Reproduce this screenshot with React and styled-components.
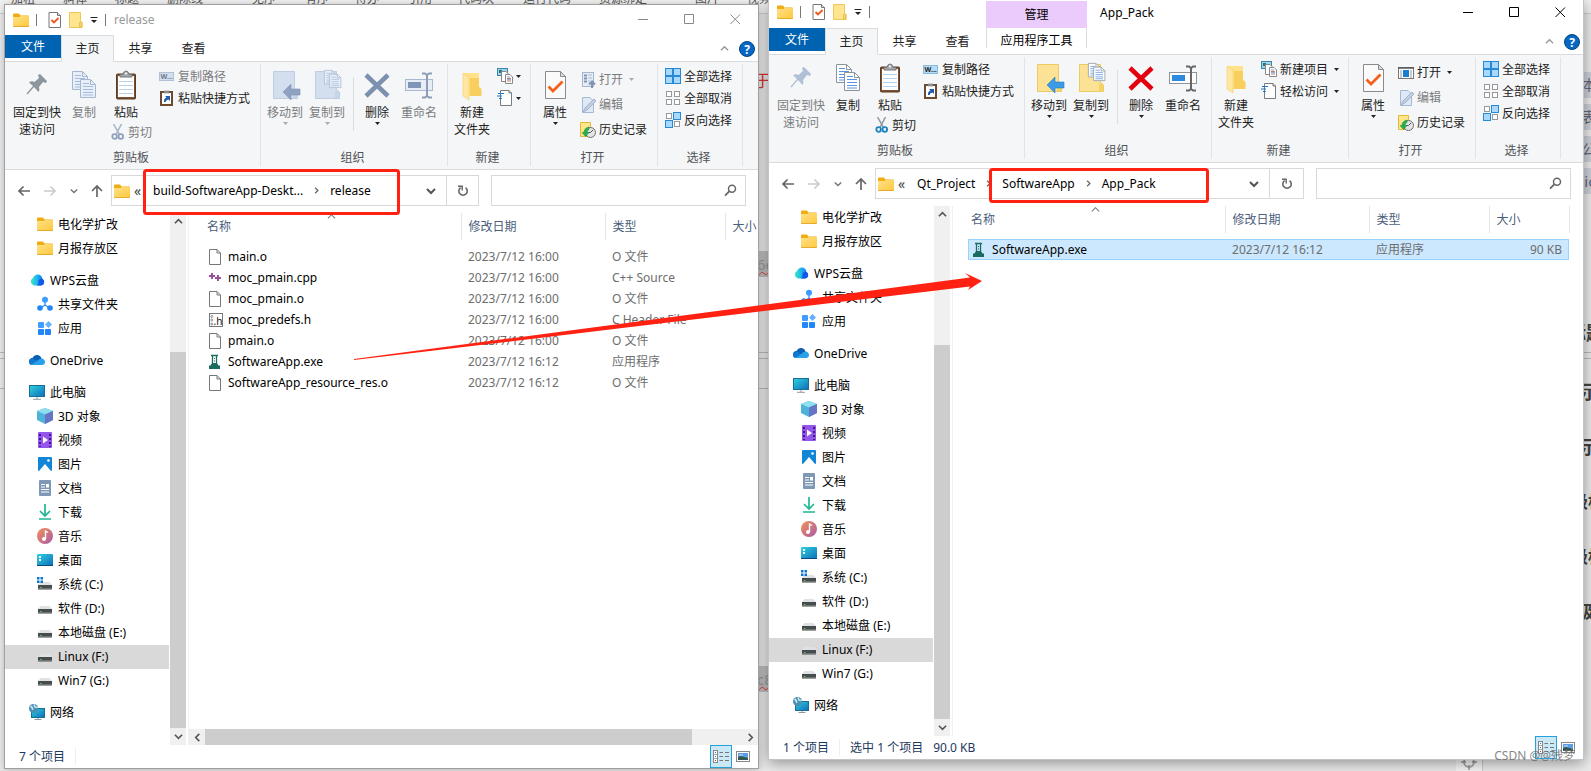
import { createContext, useContext } from 'react'
import styled, { createGlobalStyle, css } from 'styled-components'

const GlobalStyle = createGlobalStyle`
* { box-sizing: border-box; }
body {
  margin: 0;
  overflow: hidden;
  font-family: "Noto Sans", "Noto Sans CJK SC", sans-serif;
  font-size: 12px;
  line-height: 17px;
  color: #000;
}
button, input {
  font: inherit;
  color: inherit;
  border: 0;
  padding: 0;
  background: none;
}
a { color: inherit; text-decoration: none; }
`

const Dim = createContext(false)

/* ---------- small icons ---------- */

const Folder = () => (
  <svg width="16" height="16" viewBox="0 0 16 16">
    <defs>
      <linearGradient id="folder" x1="0" y1="0" x2="1" y2="1">
        <stop offset="0" stopColor="#ffe08a" /><stop offset="1" stopColor="#ffc93c" />
      </linearGradient>
    </defs>
    <path d="M0 2.5Q0 1.5 1 1.5H6L7.5 3.5H15Q16 3.5 16 4.5V8H0Z" fill="#f0ac12" />
    <path d="M0 5H6.5L8 4H16V13.5Q16 14.5 15 14.5H1Q0 14.5 0 13.5Z" fill="url(#folder)" />
    <path d="M0 13.5Q0 14.5 1 14.5H15Q16 14.5 16 13.5" fill="none" stroke="#e8aa2b" />
  </svg>
)
const CheckedPage = () => (
  <svg width="14" height="16" viewBox="0 0 14 16">
    <path d="M1 .5H9.5L12.5 3.5V15.5H1Z" fill="#fff" stroke="#777" />
    <path d="M9.5.5V3.5H12.5" fill="#ddd" stroke="#777" />
    <path d="M3.500 8L6 10.5L10.5 6" fill="none" stroke="#f0561d" strokeWidth="1.8" />
  </svg>
)
const TallFolder = () => (
  <svg width="14" height="16" viewBox="0 0 14 16">
    <path d="M.5.5H11.5V9L13 11V15.5H.5Z" fill="#ffe58f" stroke="#efc659" />
    <path d="M10.5 15V10.5L13 10V15Z" fill="#f8d566" stroke="#e3b53d" strokeWidth=".7" />
  </svg>
)
const QuickArrow = () => (
  <svg width="8" height="8" viewBox="0 0 8 8"><path d="M.5 1.5H7.5" stroke="#222" /><path d="M1 4H7L4 7Z" fill="#222" /></svg>
)
const Triangle = ({ color = '#222' }) => (
  <svg width="5" height="3" viewBox="0 0 5 3"><path d="M0 0H5L2.5 3Z" fill={color} /></svg>
)
const Chevron = ({ dir = 'down', size = 9, color = '#555', weight = 1.8 }) => {
  const d = { down: 'M1 3L5 7L9 3', up: 'M1 7L5 3L9 7', left: 'M7 1L3 5L7 9', right: 'M3 1L7 5L3 9' }[dir]
  return (
    <svg width={size} height={size} viewBox="0 0 10 10"><path d={d} fill="none" stroke={color} strokeWidth={weight} /></svg>
  )
}
const Help = () => (
  <svg width="16" height="16" viewBox="0 0 16 16">
    <circle cx="8" cy="8" r="7.5" fill="#0668c4" stroke="#06457f" />
    <text x="8" y="12.500" fontSize="12" fontWeight="700" textAnchor="middle" fill="#fff">?</text>
  </svg>
)
const ArrowIcon = ({ dir, color = '#666' }) => (
  <svg width="14" height="14" viewBox="0 0 14 14">
    <path
      d={{ left: 'M13 7H2M6.5 2.5L2 7L6.5 11.5', right: 'M1 7H12M7.5 2.5L12 7L7.5 11.5', up: 'M7 13V2M2 7L7 2L12 7' }[dir]}
      fill="none" stroke={color} strokeWidth="1.7"
    />
  </svg>
)
const Refresh = () => (
  <svg width="12" height="12" viewBox="0 0 12 12">
    <path d="M8.5 2.6A4.2 4.2 0 1 1 3.6 2.6" fill="none" stroke="#666" strokeWidth="1.6" />
    <path d="M1 1.3H5.2V5.5" fill="none" stroke="#666" strokeWidth="1.4" />
  </svg>
)
const Magnifier = () => (
  <svg width="13" height="13" viewBox="0 0 13 13">
    <circle cx="8" cy="4.7" r="3.5" fill="none" stroke="#666" strokeWidth="1.5" /><path d="M5.5 7.2L1 11.7" stroke="#666" strokeWidth="1.8" />
  </svg>
)

/* ---------- ribbon icons ---------- */

const Pin = ({ color = '#b1c0d6' }) => (
  <svg width="32" height="32" viewBox="0 0 32 32">
    <path d="M17 6L19 5L26 12L25 14L22 13L18 18Q19 21 17.5 23L13 18L6.5 25.5L5.5 24.5L12 17L8 13.5Q10.5 11.5 13.5 13L18 9Z" fill={color} />
  </svg>
)
const GreyPin = () => <Pin color="#8b969e" />
const Sheet = ({ x, y, dim }) => (
  <g transform={`translate(${x} ${y})`}>
    <path d="M.5.5H10.5L15.5 5.5V18.5H.5Z" fill={dim ? '#e9eff9' : '#fff'} stroke={dim ? '#a8b7d0' : '#8c959e'} />
    <path d="M10.5.5V5.5H15.5" fill="none" stroke={dim ? '#a8b7d0' : '#8c959e'} />
    <path d="M3 4.5H9M3 7.5H13M3 10.5H13M3 13.5H13M3 16H13" stroke={dim ? '#a4bbe0' : '#5b93e0'} />
  </g>
)
const Copy = () => {
  const dim = useContext(Dim)
  return (
    <svg width="32" height="32" viewBox="0 0 32 32"><Sheet x={4} y={2} dim={dim} /><Sheet x={12} y={10} dim={dim} /></svg>
  )
}
const Paste = () => (
  <svg width="32" height="32" viewBox="0 0 32 32">
    <rect x="6.5" y="5" width="19" height="25" rx="1" fill="#7a5336" stroke="#5b3b23" />
    <rect x="8" y="7" width="16" height="21" fill="#fff" />
    <path d="M9 12.5H23M9 16.5H23M9 20.5H23M9 24.5H23" stroke="#b5d5ee" />
    <path d="M10 8V5.5H13Q13.5 2 16 2T19 5.5H22V8Z" fill="#a4a9ae" stroke="#777" />
    <circle cx="16" cy="4.5" r="1" fill="#fff" />
  </svg>
)
const Scissors = () => {
  const dim = useContext(Dim)
  return (
    <svg width="14" height="16" viewBox="0 0 14 16">
      <path d="M2.5 0L8.5 10.5M10.5 0L5 10.5" stroke={dim ? '#a3b0c6' : '#8d97a1'} strokeWidth="1.5" />
      <circle cx="3.6" cy="12.5" r="2.3" fill="none" stroke={dim ? '#90a1bd' : '#1d84c0'} strokeWidth="1.8" />
      <circle cx="9.8" cy="12.5" r="2.3" fill="none" stroke={dim ? '#90a1bd' : '#1d84c0'} strokeWidth="1.8" />
    </svg>
  )
}
const PathIcon = () => {
  const dim = useContext(Dim)
  return (
    <svg width="16" height="16" viewBox="0 0 16 16">
      <rect x=".5" y="4.5" width="14" height="8" fill={dim ? '#d5e0ee' : '#b6dcf7'} stroke={dim ? '#b1c1d6' : '#86bbdf'} />
      <text x="1.500" y="11" fontSize="7" fontWeight="700" fill={dim ? '#6c7b91' : '#222'}>W...</text>
    </svg>
  )
}
const PasteShortcut = () => (
  <svg width="16" height="16" viewBox="0 0 16 16">
    <rect x="2" y="2" width="11" height="13" fill="#fff" stroke="#6b4a30" strokeWidth="2" />
    <path d="M5 3V1H10V3Z" fill="#999" stroke="#777" strokeWidth=".6" />
    <path d="M5 12Q4.5 8.5 7.5 7.5L6 6H11V11L9.5 9.500Q7 9.5 6.5 12Z" fill="#215ba8" />
  </svg>
)
const FolderBase = ({ dim }) => (
  <>
    <path d="M4.5 2.5H25.5V21L28.5 23V29.5H4.5Z" fill={dim ? '#d3deee' : '#fce294'} stroke={dim ? '#bfcde1' : '#edcb64'} />
    <path d="M24 29V22L28 21V29Z" fill={dim ? '#c7d5e9' : '#f5d462'} />
  </>
)
const MoveTo = () => {
  const dim = useContext(Dim)
  return (
    <svg width="32" height="32" viewBox="0 0 32 32">
      <FolderBase dim={dim} />
      <path d="M14 23L22 15V20H31V26H22V31Z" fill={dim ? '#8fa2c0' : '#3b9be6'} stroke={dim ? '#8193b1' : '#2581c8'} strokeWidth=".6" />
    </svg>
  )
}
const CopyTo = () => {
  const dim = useContext(Dim)
  return (
    <svg width="32" height="32" viewBox="0 0 32 32">
      <FolderBase dim={dim} />
      <g transform="translate(13 1) scale(.75)"><Sheet x={0} y={0} dim={dim} /><Sheet x={7} y={5} dim={dim} /></g>
    </svg>
  )
}
const Delete = () => {
  const dim = useContext(Dim)
  return (
    <svg width="32" height="32" viewBox="0 0 32 32">
      <path d="M5 6L27 27M27 6L5 27" stroke={dim ? '#7c90b0' : '#e3000f'} strokeWidth="4.5" />
    </svg>
  )
}
const Rename = () => {
  const dim = useContext(Dim)
  return (
    <svg width="32" height="32" viewBox="0 0 32 32">
      <rect x="2.5" y="10.5" width="27" height="11" fill={dim ? '#e6edf7' : '#fff'} stroke={dim ? '#a8b8d0' : '#8d9399'} />
      <rect x="5" y="13" width="13" height="6" fill={dim ? '#7f95b8' : '#2c8ae0'} />
      <path d="M19 4.5H22L24 6L26 4.5H29M19 28.5H22L24 27L26 28.5H29M24 5V28" fill="none" stroke={dim ? '#8d9db6' : '#666'} strokeWidth="2" />
    </svg>
  )
}
const NewFolder = () => (
  <svg width="32" height="32" viewBox="0 0 32 32">
    <path d="M7 4H23V18L25 20V27H12Z" fill="#ffe28a" />
    <path d="M14 9H23V18L25.5 20V27H14Z" fill="#f8cf5e" />
    <path d="M7 4L13 8V31L7 27Z" fill="#ffe7a1" stroke="#f3cc64" strokeWidth=".6" />
  </svg>
)
const NewItem = () => (
  <svg width="16" height="16" viewBox="0 0 16 16">
    <rect x=".5" y=".5" width="10" height="7" fill="#9fd3ee" stroke="#3c86aa" /><rect x="2" y="2" width="3" height="3" fill="#1c7c70" />
    <path d="M4.5 3.5H9L11.5 6V13.5H4.5Z" fill="#fff" stroke="#888" />
    <path d="M8.5 6.5H13L15.5 9V15.5H8.5Z" fill="#fff" stroke="#888" /><path d="M10 10.5H14M10 13H14" stroke="#d47b6c" /><path d="M10 9H13M10 11.7H14" stroke="#71a4dc" />
  </svg>
)
const EasyAccess = () => (
  <svg width="16" height="16" viewBox="0 0 16 16">
    <path d="M3.5.5H12L14.5 3V15.5H3.5Z" fill="#fff" stroke="#7b7b7b" /><path d="M12 .5V3H14.5" fill="none" stroke="#7b7b7b" />
    <path d="M1 3.5H7M0 6H5M2 8.5H5" stroke="#1e7acc" strokeWidth="1.2" />
  </svg>
)
const Properties = () => (
  <svg width="32" height="32" viewBox="0 0 32 32">
    <path d="M6.5 2.5H21.5L26.5 7.5V29.5H6.5Z" fill="#fafafa" stroke="#8b8b8b" />
    <path d="M21.5 2.5V7.5H26.5Z" fill="#ddd" stroke="#8b8b8b" />
    <path d="M9.5 17.5L14 22L23.5 12.5" fill="none" stroke="#f2601c" strokeWidth="2.8" />
  </svg>
)
const Open = () => {
  const dim = useContext(Dim)
  return dim ? (
    <svg width="16" height="16" viewBox="0 0 16 16">
      <rect x="2.5" y=".5" width="11" height="14" fill="#e6edf7" stroke="#a6b5cc" />
      <path d="M4 3.5H7M4 6.5H7M4 9.5H7" stroke="#8093b3" strokeWidth="2" /><path d="M8 3H12M8 6H12M8 9H10" stroke="#a9b9d0" />
      <path d="M12 16V10M9 12.5L12 9.5L15 12.5" fill="none" stroke="#7f93b5" strokeWidth="2" />
    </svg>
  ) : (
    <svg width="16" height="16" viewBox="0 0 16 16">
      <rect x=".5" y="2.5" width="15" height="11" fill="#fff" stroke="#777" /><path d="M0 3H16" stroke="#555" strokeWidth="1.5" />
      <path d="M2 6H4M2 8H4M2 10H4M2 12H4M12 6H14M12 8H14M12 10H14M12 12H14" stroke="#999" /><rect x="5" y="5" width="6" height="7" fill="#187fd0" />
    </svg>
  )
}
const Edit = () => (
  <svg width="16" height="16" viewBox="0 0 16 16">
    <path d="M2.5.5H10L13.5 4V15.5H2.5Z" fill="#dfe8f5" stroke="#a6b8d3" />
    <path d="M3 15L5 11L14 2L16 4L7 13Z" fill="#c2cfe3" stroke="#8ea3c2" strokeWidth=".7" />
  </svg>
)
const History = () => (
  <svg width="16" height="16" viewBox="0 0 16 16">
    <path d="M.5.5H10.5V14.5H.5Z" fill="#ffe58a" stroke="#e3b83d" />
    <circle cx="10.5" cy="10.5" r="5" fill="#e2e4e6" stroke="#707070" /><path d="M10.5 10.5L13 8M10.5 10.5H8" stroke="#555" />
    <path d="M9 5Q4 6 4 10.5H2L5.5 14.5L9 10.5H7Q7 8 9 7.5Z" fill="#27b04b" stroke="#168a35" strokeWidth=".5" />
  </svg>
)
const Cells = ({ on }) => (
  <svg width="16" height="16" viewBox="0 0 16 16">
    {[[0, 0], [8, 0], [0, 8], [8, 8]].map(([x, y], i) => on[i] ? (
      <rect key={i} x={x + .5} y={y + .5} width="7" height="7" fill="#a8d8fb" stroke="#2589d6" />
    ) : (
      <rect key={i} x={x + 1.5} y={y + 1.5} width="5" height="5" fill="#fff" stroke="#999" />
    ))}
  </svg>
)
const SelectAll = () => <Cells on={[1, 1, 1, 1]} />
const SelectNone = () => <Cells on={[0, 0, 0, 0]} />
const Invert = () => <Cells on={[0, 1, 1, 0]} />

/* ---------- tree and file icons ---------- */

const Wps = () => (
  <svg width="16" height="16" viewBox="0 0 16 16">
    <defs><linearGradient id="wps"><stop offset="0" stopColor="#38ecc0" /><stop offset=".6" stopColor="#1aa5f5" /><stop offset="1" stopColor="#1259e8" /></linearGradient></defs>
    <path d="M5 13.5A4 4 0 0 1 4 6Q5.5 2.5 9 2.5T13.5 7A3.5 3.5 0 0 1 12 13.5Z" fill="url(#wps)" />
    <path d="M8 13.5Q10 12 9.5 8.5Q11 6 13.5 7A3.5 3.5 0 0 1 12 13.5Z" fill="#1259e8" />
  </svg>
)
const Share = () => (
  <svg width="16" height="16" viewBox="0 0 16 16">
    <path d="M8 4V9L3.5 12M8 9L12.5 12" fill="none" stroke="#2b8cff" strokeWidth="1.3" />
    <circle cx="8" cy="3.8" r="3" fill="#3a9cff" /><circle cx="3" cy="12" r="2.8" fill="#2186fa" /><circle cx="13" cy="12" r="2.8" fill="#2186fa" />
  </svg>
)
const Apps = () => (
  <svg width="16" height="16" viewBox="0 0 16 16">
    <rect x="1" y="2" width="6" height="6" rx="1" fill="#3f9dff" /><path d="M11.5 1L15 4.5L11.5 8L8 4.5Z" fill="#66b1ff" />
    <rect x="1" y="9" width="6" height="6" rx="1" fill="#2186fa" /><rect x="8" y="9" width="6" height="6" rx="1" fill="#2186fa" />
  </svg>
)
const OneDrive = () => (
  <svg width="16" height="16" viewBox="0 0 16 16">
    <path d="M3.5 13A3.5 3.5 0 0 1 3.5 6Q5 3 8 3Q11.5 3 12.5 6.5L9 10Z" fill="#0a5fb4" />
    <path d="M0 10Q1 6.5 4 6.5L10 10L4 13Q.5 13 0 10Z" fill="#1079d2" />
    <path d="M2 13L8 9Q10.5 6 13 6.5Q16 7.5 16 10T13 13Z" fill="#28a0ea" />
  </svg>
)
const screenGradient = (
  <defs><linearGradient id="screen" x1="0" y1="0" x2="1" y2="1"><stop offset="0" stopColor="#2fd3df" /><stop offset="1" stopColor="#0e6cb9" /></linearGradient></defs>
)
const Pc = () => (
  <svg width="16" height="16" viewBox="0 0 16 16">
    {screenGradient}
    <rect x=".5" y="1.5" width="15" height="11" fill="url(#screen)" stroke="#1b6d91" /><path d="M8 13V15M4 15.3H12" stroke="#8b9ba6" />
  </svg>
)
const Cube = () => (
  <svg width="16" height="16" viewBox="0 0 16 16">
    <path d="M8 0L16 3V12L8 16L0 12V3Z" fill="#4fb2d8" /><path d="M0 3L8 0L16 3L8 6.5Z" fill="#8ee0ee" /><path d="M8 6.5L16 3V12L8 16Z" fill="#6674c4" />
  </svg>
)
const Video = () => (
  <svg width="16" height="16" viewBox="0 0 16 16">
    <rect x="1" y="0" width="14" height="16" rx="1" fill="#9355ea" />
    <path d="M3 2V15M13 2V15" stroke="#401a84" strokeWidth="2" strokeDasharray="2 2" /><path d="M6 4.5L11 8L6 11.5Z" fill="#fff" />
  </svg>
)
const Picture = () => (
  <svg width="16" height="16" viewBox="0 0 16 16">
    <rect x="1" y="1" width="14" height="14" rx="1" fill="#1185d6" /><path d="M2 15L8 8L14 15Z" fill="#fff" /><circle cx="11.5" cy="4.5" r="1.3" fill="#fff" />
  </svg>
)
const Document = () => (
  <svg width="16" height="16" viewBox="0 0 16 16">
    <rect x="2" y="0" width="12" height="16" rx="1" fill="#7e98b5" /><path d="M4 4.5H8M4 7H8M4 9.5H12M4 12H12" stroke="#fff" /><rect x="9" y="4" width="3" height="3.5" fill="#fff" />
  </svg>
)
const Download = () => (
  <svg width="16" height="16" viewBox="0 0 16 16"><path d="M8 0V11M3 7L8 12L13 7M2 15H14" fill="none" stroke="#1fb794" strokeWidth="1.7" /></svg>
)
const Music = () => (
  <svg width="16" height="16" viewBox="0 0 16 16">
    <defs><linearGradient id="music" x1="0" y1="0" x2="1" y2="1"><stop offset="0" stopColor="#f59055" /><stop offset="1" stopColor="#aa5aa8" /></linearGradient></defs>
    <circle cx="8" cy="8" r="8" fill="url(#music)" /><path d="M8.5 11V3L11 4.5" fill="none" stroke="#fff" strokeWidth="1.4" /><circle cx="7" cy="11" r="2" fill="#fff" />
  </svg>
)
const DesktopIcon = () => (
  <svg width="16" height="16" viewBox="0 0 16 16">
    {screenGradient}
    <rect y="2" width="16" height="12" rx="1" fill="url(#screen)" /><path d="M3 4V9" stroke="#fff" strokeWidth="2" strokeDasharray="2 1" /><path d="M0 13.5H16" stroke="#0a497e" />
  </svg>
)
const Disk = ({ system }) => (
  <svg width="16" height="16" viewBox="0 0 16 16">
    <path d="M3.5 6H12.5L15 9H1Z" fill="#dfe2e4" /><rect x="1" y="9" width="14" height="4.5" fill="#474b4d" /><path d="M1 13H15" stroke="#999" />
    <rect x="3" y="11" width="1.5" height="1" fill="#40df40" />
    {system && <path d="M0 1H2.5V3.5H0ZM3.5 1H6V3.5H3.5ZM0 4.5H2.5V7H0ZM3.5 4.5H6V7H3.5Z" fill="#0a74d2" />}
  </svg>
)
const SystemDisk = () => <Disk system />
const Network = () => (
  <svg width="16" height="16" viewBox="0 0 16 16">
    {screenGradient}
    <rect x="2.5" y="4.5" width="13" height="9" fill="url(#screen)" stroke="#1b6d91" /><path d="M9 14V15.5M5.5 15.5H12.5" stroke="#8b9ba6" />
    <circle cx="4.5" cy="4.5" r="4.5" fill="#4b8fb4" /><path d="M1.5 2Q4 3.5 3.5 6M5 .5L6 3L8.5 3.5" stroke="#c8e6f1" strokeWidth="1.5" fill="none" />
  </svg>
)
const Page = () => (
  <svg width="16" height="16" viewBox="0 0 16 16"><path d="M.5.500H8L11.5 4V15.5H.5Z" fill="#fff" stroke="#777" /><path d="M8 .5V4H11.5" fill="none" stroke="#777" /></svg>
)
const Cpp = () => (
  <svg width="16" height="16" viewBox="0 0 16 16"><path d="M0 6H6M3 3V9M6 8H12M9 5V11" stroke="#99509b" strokeWidth="2" /></svg>
)
const HeaderFile = () => (
  <svg width="16" height="16" viewBox="0 0 16 16">
    <rect x=".5" y="1.5" width="13" height="13" fill="#fff" stroke="#777" />
    <circle cx="2.8" cy="4.5" r="1" fill="none" stroke="#666" strokeWidth=".7" /><circle cx="2.8" cy="8" r="1" fill="none" stroke="#666" strokeWidth=".7" /><circle cx="2.8" cy="12" r="1" fill="none" stroke="#666" strokeWidth=".7" />
    <text x="4.500" y="13" fontSize="10" fill="#111">.h</text>
  </svg>
)
const Flask = () => (
  <svg width="16" height="16" viewBox="0 0 16 16">
    <path d="M2 1.5H9M3.5 2V9M7.5 2V9" fill="none" stroke="#1c6e62" strokeWidth="1.3" />
    <path d="M3 9H8L9.500 11.5H11V15H0V11.500H1.5Z" fill="#1a6b5f" /><path d="M5 4.500H6M5 7H6" stroke="#1c6e62" />
  </svg>
)
const DetailsView = () => (
  <svg width="16" height="14" viewBox="0 0 16 14">
    <rect x=".5" y=".5" width="4" height="12" fill="#fff" stroke="#888" /><path d="M1 4.5H4M1 8.5H4" stroke="#aaa" />
    <rect x="2" y="2" width="1" height="1" fill="#3971c9" /><rect x="2" y="6" width="1" height="1" fill="#3971c9" /><rect x="2" y="10" width="1" height="1" fill="#cc3131" />
    <path d="M6.5 2.5H10M12 2.5H16M6.5 6.5H10M12 6.5H16M6.5 10.5H10M12 10.5H16" stroke="#777" />
  </svg>
)
const ThumbView = () => (
  <svg width="14" height="12" viewBox="0 0 14 12">
    <rect x=".5" y=".5" width="13" height="10" fill="#fff" stroke="#888" /><rect x="2" y="2" width="10" height="7" fill="#5c9de6" />
    <path d="M3 4H7" stroke="#cfe4fa" /><path d="M2 6L5 5L12 7V9H2Z" fill="#31574f" />
  </svg>
)

/* ---------- data ---------- */

const tree = [
  [{ icon: Folder, name: '电化学扩改', sub: true }, { icon: Folder, name: '月报存放区', sub: true }],
  [{ icon: Wps, name: 'WPS云盘' }, { icon: Share, name: '共享文件夹', sub: true }, { icon: Apps, name: '应用', sub: true }],
  [{ icon: OneDrive, name: 'OneDrive' }],
  [
    { icon: Pc, name: '此电脑' },
    { icon: Cube, name: '3D 对象', sub: true },
    { icon: Video, name: '视频', sub: true },
    { icon: Picture, name: '图片', sub: true },
    { icon: Document, name: '文档', sub: true },
    { icon: Download, name: '下载', sub: true },
    { icon: Music, name: '音乐', sub: true },
    { icon: DesktopIcon, name: '桌面', sub: true },
    { icon: SystemDisk, name: '系统 (C:)', sub: true },
    { icon: Disk, name: '软件 (D:)', sub: true },
    { icon: Disk, name: '本地磁盘 (E:)', sub: true },
    { icon: Disk, name: 'Linux (F:)', sub: true, active: true },
    { icon: Disk, name: 'Win7 (G:)', sub: true },
  ],
  [{ icon: Network, name: '网络' }],
]

const releaseFiles = [
  { icon: Page, name: 'main.o', date: '2023/7/12 16:00', type: 'O 文件' },
  { icon: Cpp, name: 'moc_pmain.cpp', date: '2023/7/12 16:00', type: 'C++ Source' },
  { icon: Page, name: 'moc_pmain.o', date: '2023/7/12 16:00', type: 'O 文件' },
  { icon: HeaderFile, name: 'moc_predefs.h', date: '2023/7/12 16:00', type: 'C Header File' },
  { icon: Page, name: 'pmain.o', date: '2023/7/12 16:00', type: 'O 文件' },
  { icon: Flask, name: 'SoftwareApp.exe', date: '2023/7/12 16:12', type: '应用程序' },
  { icon: Page, name: 'SoftwareApp_resource_res.o', date: '2023/7/12 16:12', type: 'O 文件' },
]
const packFiles = [
  { icon: Flask, name: 'SoftwareApp.exe', date: '2023/7/12 16:12', type: '应用程序', size: '90 KB', selected: true },
]

const editorTools = [
  ['加粗', 11], ['斜体', 63], ['标题', 115], ['删除线', 167], ['无序', 252], ['有序', 305], ['待办', 355],
  ['引用', 408], ['代码块', 458], ['运行代码', 523], ['资源绑定', 599], ['图片', 695], ['视频', 747],
]
const editorWords = [
  { text: '于', x: 754, y: 71, size: 17, color: '#d33' },
  { text: '6e', x: 757, y: 254, size: 15, color: '#999', chip: '#c0c0c0', wavy: true },
  { text: 'c8', x: 757, y: 669, size: 15, color: '#999', chip: '#c0c0c0', wavy: true },
  { text: '本', x: 1582, y: 75, size: 14, color: '#667', chip: '#cfd2da' },
  { text: '表', x: 1582, y: 107, size: 14, color: '#667', chip: '#cfd2da' },
  { text: '公', x: 1582, y: 139, size: 14, color: '#667', chip: '#cfd2da' },
  { text: 'nic', x: 1575, y: 171, size: 15, color: '#667', chip: '#cfd2da' },
  { text: '标题', x: 1567, y: 323, size: 19, color: '#444', bold: true },
  { text: '示', x: 1580, y: 382, size: 19, color: '#444', bold: true },
  { text: '示', x: 1580, y: 437, size: 18, color: '#444', bold: true },
  { text: '级标', x: 1571, y: 492, size: 17, color: '#444', bold: true },
  { text: '级标', x: 1571, y: 547, size: 17, color: '#444', bold: true },
  { text: '级', x: 1577, y: 602, size: 17, color: '#444', bold: true },
]

/* ---------- explorer parts ---------- */

const RibbonItem = ({ icon: Icon, label, name, wide, drop, off, dimIcon, small, tall, inset }) => {
  const Part = small ? SmallButton : BigButton
  return (
    <Part type="button" disabled={off} $wide={wide} $tall={tall} $inset={inset} aria-label={name}>
      <Dim.Provider value={off || dimIcon}><Icon /></Dim.Provider>
      {label && <span>{label}</span>}
      {drop && <Triangle color={off ? '#aaa' : '#222'} />}
    </Part>
  )
}

const Ribbon = ({ active }) => (
  <RibbonBar>
    <Group $width={256}>
      <GroupBody>
        <RibbonItem icon={active ? Pin : GreyPin} label={'固定到快\n速访问'} wide={58} off={active} />
        <RibbonItem icon={Copy} label="复制" wide={36} off={!active} />
        <PasteColumn>
          <RibbonItem icon={Paste} label="粘贴" wide={48} />
          <RibbonItem icon={Scissors} label="剪切" small inset off={!active} />
        </PasteColumn>
        <Stack>
          <RibbonItem icon={PathIcon} label="复制路径" small off={!active} />
          <RibbonItem icon={PasteShortcut} label="粘贴快捷方式" small />
        </Stack>
      </GroupBody>
      <GroupLabel>剪贴板</GroupLabel>
    </Group>
    <Group $width={187}>
      <GroupBody>
        <RibbonItem icon={MoveTo} label="移动到" wide={42} drop off={!active} />
        <RibbonItem icon={CopyTo} label="复制到" wide={42} drop off={!active} />
        <Separator />
        <RibbonItem icon={Delete} label="删除" wide={42} drop dimIcon={!active} />
        <RibbonItem icon={Rename} label="重命名" wide={42} off={!active} />
      </GroupBody>
      <GroupLabel>组织</GroupLabel>
    </Group>
    <Group $width={active ? 137 : 83}>
      <GroupBody>
        <RibbonItem icon={NewFolder} label={'新建\n文件夹'} wide={42} />
        <Stack>
          <RibbonItem icon={NewItem} label={active && '新建项目'} name="新建项目" small drop />
          <RibbonItem icon={EasyAccess} label={active && '轻松访问'} name="轻松访问" small drop />
        </Stack>
      </GroupBody>
      <GroupLabel>新建</GroupLabel>
    </Group>
    <Group $width={127}>
      <GroupBody>
        <RibbonItem icon={Properties} label="属性" wide={42} drop />
        <Stack $low>
          <RibbonItem icon={Open} label="打开" small tall drop off={!active} />
          <RibbonItem icon={Edit} label="编辑" small tall off />
          <RibbonItem icon={History} label="历史记录" small tall />
        </Stack>
      </GroupBody>
      <GroupLabel>打开</GroupLabel>
    </Group>
    <Group $width={85}>
      <GroupBody>
        <Stack>
          <RibbonItem icon={SelectAll} label="全部选择" small />
          <RibbonItem icon={SelectNone} label="全部取消" small />
          <RibbonItem icon={Invert} label="反向选择" small />
        </Stack>
      </GroupBody>
      <GroupLabel>选择</GroupLabel>
    </Group>
  </RibbonBar>
)

const Explorer = ({ title, active, crumbs, files, status }) => (
  <Window $active={active}>
    <TitleBar $active={active}>
      <QuickBar $active={active}>
        <Folder /><Bar $first /><CheckedPage /><TallFolder /><QuickArrow /><Bar />
      </QuickBar>
      {active && <ToolContext>管理</ToolContext>}
      <Title $active={active}>{title}</Title>
      <CaptionButton type="button" aria-label="最小化" $active={active}><svg width="11" height="11"><path d="M0 5.5H10" stroke="currentColor" /></svg></CaptionButton>
      <CaptionButton type="button" aria-label="最大化" $active={active}><svg width="11" height="11"><path d="M.5.5H9.5V9.5H.5Z" fill="none" stroke="currentColor" /></svg></CaptionButton>
      <CaptionButton type="button" aria-label="关闭" $active={active}><svg width="11" height="11"><path d="M.5.5L10 10M10 .5L.5 10" stroke="currentColor" /></svg></CaptionButton>
    </TitleBar>
    <Tabs>
      <FileTab type="button">文件</FileTab>
      <Tab type="button" $current>主页</Tab>
      <Tab type="button">共享</Tab>
      <Tab type="button">查看</Tab>
      {active && <ToolTab type="button">应用程序工具</ToolTab>}
      <TabsEnd><Chevron dir="up" color="#999" weight={1.5} /><Help /></TabsEnd>
    </Tabs>
    <Ribbon active={active} />
    <AddressRow>
      <NavArrows>
        <ArrowIcon dir="left" /><ArrowIcon dir="right" color="#ccc" /><Chevron size={8} color="#777" /><ArrowIcon dir="up" />
      </NavArrows>
      <Address>
        <Folder />
        <Crumbs>
          <More>«</More>
          {crumbs.map((c, i) => [i > 0 && <Chevron key={i} dir="right" size={7} color="#666" />, <a key={c} href="#top">{c}</a>])}
        </Crumbs>
        <Chevron size={10} weight={2} />
        <RefreshButton type="button" aria-label="刷新" $active={active}><Refresh /></RefreshButton>
      </Address>
      <Search>
        <input type="search" aria-label="搜索" />
        <Magnifier />
      </Search>
    </AddressRow>
    <Main>
      <Tree>
        {tree.map((group, i) => (
          <TreeGroup key={i}>
            {group.map(({ icon: Icon, name, sub, active: current }) => (
              <TreeItem key={name} href="#top" $sub={sub} $current={current}><Icon />{name}</TreeItem>
            ))}
          </TreeGroup>
        ))}
      </Tree>
      <VScroll><ScrollEnd><Chevron dir="up" /></ScrollEnd><Track $size={122} /><Thumb $size={376} /><ScrollEnd><Chevron /></ScrollEnd></VScroll>
      <Files>
        <SortMark><Chevron dir="up" color="#777" weight={1.2} /></SortMark>
        <Table>
          <thead><tr><NameHead>名称</NameHead><DateHead>修改日期</DateHead><TypeHead>类型</TypeHead><SizeHead>大小</SizeHead></tr></thead>
          <tbody>
            {files.map(({ icon: Icon, name, date, type, size, selected }) => (
              <Row key={name} $selected={selected}>
                <td><FileName><Icon />{name}</FileName></td><td>{date}</td><td>{type}</td><td>{size}</td>
              </Row>
            ))}
          </tbody>
        </Table>
        {!active && (
          <HScroll><ScrollEnd><Chevron dir="left" /></ScrollEnd><Thumb $size={485} /><Track $size={50} /><ScrollEnd><Chevron dir="right" /></ScrollEnd></HScroll>
        )}
      </Files>
    </Main>
    <Status>
      <Count>{status[0]}</Count>
      {status.slice(1).map((s) => <span key={s}>{s}</span>)}
      <Views>
        <ViewButton type="button" aria-label="详细信息" $on><DetailsView /></ViewButton>
        <ViewButton type="button" aria-label="缩略图"><ThumbView /></ViewButton>
      </Views>
    </Status>
  </Window>
)

const App = () => (
  <Desktop id="top">
    <GlobalStyle />
    <Editor aria-hidden="true">
      {editorTools.map(([text, x]) => <Word key={text} $x={x} $y={-11} $size={12} $color="#555">{text}</Word>)}
      {editorWords.map((w) => (
        <Word key={w.text + w.y} $x={w.x} $y={w.y} $size={w.size} $color={w.color} $chip={w.chip} $wavy={w.wavy} $bold={w.bold}>{w.text}</Word>
      ))}
      <Rule $y={352} /><Rule $y={358} /><Rule $y={388} />
      <Corner>
        <svg width="16" height="16" viewBox="0 0 16 16"><circle cx="8" cy="8" r="5" fill="none" stroke="#aaa" strokeWidth="2" /><path d="M8 0V5M8 11V16M0 8H5M11 8H16" stroke="#999" strokeWidth="1.5" /></svg>
      </Corner>
    </Editor>
    <Explorer title="release" crumbs={['build-SoftwareApp-Deskt...', 'release']} files={releaseFiles} status={['7 个项目']} />
    <Explorer active title="App_Pack" crumbs={['Qt_Project', 'SoftwareApp', 'App_Pack']} files={packFiles} status={['1 个项目', '选中 1 个项目', '90.0 KB']} />
    <Marks width="1591" height="771" aria-hidden="true">
      <rect x="144.5" y="170.5" width="254" height="43" rx="2" fill="none" stroke="#ff2213" strokeWidth="3" />
      <rect x="990.5" y="169.5" width="217" height="32" rx="2" fill="none" stroke="#ff2213" strokeWidth="3" />
      <path d="M354 359L970 277.5L965 273L982 281L968 290L970 286.5L354 360Z" fill="#ff2213" />
    </Marks>
    <Watermark>CSDN @@残梦</Watermark>
  </Desktop>
)
export default App

const Desktop = styled.div`
  position: relative;
  display: flex;
  align-items: flex-start;
  gap: 9px;
  height: 100vh;
  padding: 0 7px 0 4px;
  overflow: hidden;
`
const Editor = styled.div`
  position: absolute;
  inset: 0;
  background: linear-gradient(#f2f2f2 13px, #d0d0d0 13px, #d0d0d0 14px, #ececec 14px);
`
const Word = styled.span`
  position: absolute;
  left: ${(p) => p.$x}px;
  top: ${(p) => p.$y}px;
  font-size: ${(p) => p.$size}px;
  font-weight: ${(p) => (p.$bold ? 700 : 400)};
  line-height: 20px;
  color: ${(p) => p.$color};
  white-space: nowrap;
  ${(p) => p.$chip && css`
    background: ${p.$chip};
    box-shadow: 0 0 0 3px ${p.$chip};
  `}
  ${(p) => p.$wavy && css`text-decoration: underline wavy #e33 1px;`}
`
const Rule = styled.i`
  position: absolute;
  left: 0;
  right: 0;
  top: ${(p) => p.$y}px;
  height: 1px;
  background: #bbb;
`
const Corner = styled.div`
  position: absolute;
  right: 108px;
  bottom: 0;
  width: 27px;
  height: 17px;
  padding-left: 5px;
  background: #f8f8f8;
  border-right: 1px solid #ccc;
`
const Window = styled.section`
  position: relative;
  display: flex;
  flex-direction: column;
  min-width: 0;
  flex: ${(p) => (p.$active ? '816 1 0' : '755 1 0')};
  height: ${(p) => (p.$active ? 'calc(100vh - 11px)' : 'calc(100vh - 6px)')};
  margin-top: ${(p) => (p.$active ? 0 : '4px')};
  border: 1px solid ${(p) => (p.$active ? '#c4c4c4' : '#a0a0a0')};
  background: #fff;
  box-shadow: ${(p) => (p.$active ? '0 3px 14px rgba(0, 0, 0, .4)' : '0 1px 8px rgba(0, 0, 0, .25)')};
  ${(p) => p.$active && css`
    border-top: 0;
    /* the drop shadow must not darken the window beside it */
    clip-path: inset(0 -20px -30px -9px);
  `}
`
const TitleBar = styled.header`
  display: flex;
  align-items: center;
  flex: none;
  height: ${(p) => (p.$active ? 28 : 30)}px;
  padding-bottom: ${(p) => (p.$active ? 4 : 1)}px;
`
const QuickBar = styled.div`
  display: flex;
  align-items: center;
  width: ${(p) => (p.$active ? 217 : 109)}px;
  padding-left: 8px;
  gap: 7px;
  svg { flex: none; }
`
const Bar = styled.i`
  width: 1px;
  height: 12px;
  margin-right: ${(p) => (p.$first ? 4 : 0)}px;
  background: #777;
`
const ToolContext = styled.div`
  align-self: flex-start;
  width: 101px;
  height: 27px;
  margin-top: 1px;
  line-height: 27px;
  text-align: center;
  background: #ebcbfb;
`
const Title = styled.h1`
  flex: 1;
  margin: 0;
  padding-left: ${(p) => (p.$active ? 13 : 0)}px;
  font-size: 12px;
  font-weight: 400;
  color: ${(p) => (p.$active ? '#000' : '#999')};
`
const CaptionButton = styled.button`
  display: grid;
  place-items: center;
  width: 46px;
  height: 28px;
  color: ${(p) => (p.$active ? '#000' : '#888')};
`
const Tabs = styled.nav`
  display: flex;
  flex: none;
  height: 27px;
  box-shadow: inset 0 -1px #dadbdc;
`
const FileTab = styled.button`
  width: 56px;
  height: 23px;
  color: #fff;
  background: #0063b1;
`
const Tab = styled.button`
  width: 53px;
  border: 1px solid transparent;
  color: #222;
  ${(p) => p.$current && css`
    border-color: #dadbdc;
    border-bottom-color: #f5f6f7;
    background: #f5f6f7;
  `}
`
const ToolTab = styled.button`
  width: 101px;
  height: 20px;
  margin-left: 2px;
  padding-top: 4px;
  border: solid #dadbdc;
  border-width: 0 1px;
`
const TabsEnd = styled.div`
  display: flex;
  align-items: center;
  gap: 10px;
  margin-left: auto;
  padding-right: 3px;
`
const RibbonBar = styled.div`
  display: flex;
  flex: none;
  height: 108px;
  padding: 2px 0 3px;
  overflow: hidden;
  background: #f5f6f7;
  border-bottom: 1px solid #dadbdc;
`
const Group = styled.div`
  display: flex;
  flex-direction: column;
  flex: none;
  width: ${(p) => p.$width}px;
  padding-left: 3px;
  border-right: 1px solid #e2e3e4;
`
const GroupBody = styled.div`
  display: flex;
  flex: 1;
  align-items: flex-start;
`
const GroupLabel = styled.div`
  margin-left: -6px;
  text-align: center;
  color: #4f5256;
`
const BigButton = styled.button`
  display: flex;
  flex-direction: column;
  align-items: center;
  width: ${(p) => p.$wide}px;
  padding-top: 5px;
  color: #222;
  svg { flex: none; }
  span { margin-top: 3px; white-space: pre; }
  span + svg { margin-top: 1px; }
  &:disabled { color: #7b7d80; }
`
const SmallButton = styled.button`
  display: flex;
  align-items: center;
  gap: 3px;
  height: ${(p) => (p.$tall ? 25 : 22)}px;
  padding-left: ${(p) => (p.$inset ? 9 : 4)}px;
  color: #222;
  white-space: nowrap;
  svg { flex: none; }
  span + svg { margin-left: 3px; }
  &:disabled { color: #7b7d80; }
`
const PasteColumn = styled.div`
  width: 53px;
`
const Stack = styled.div`
  display: flex;
  flex-direction: column;
  align-items: flex-start;
  padding-top: ${(p) => (p.$low ? 3 : 1)}px;
`
const Separator = styled.i`
  width: 1px;
  height: 54px;
  margin: 13px 2px 0 5px;
  background: #dcdddf;
`
const AddressRow = styled.div`
  display: flex;
  flex: none;
  height: 43px;
  padding: 5px 12px 7px;
`
const NavArrows = styled.div`
  display: flex;
  align-items: center;
  justify-content: space-between;
  width: 87px;
  margin-right: 7px;
`
const Address = styled.div`
  display: flex;
  align-items: center;
  flex: 1;
  min-width: 0;
  padding-left: 2px;
  border: 1px solid #d9d9d9;
`
const Crumbs = styled.div`
  display: flex;
  align-items: center;
  flex: 1;
  gap: 10px;
  padding: 0 0 1px 4px;
  white-space: nowrap;
`
const More = styled.span`
  width: 9px;
  font-size: 14px;
  color: #444;
`
const RefreshButton = styled.button`
  display: grid;
  place-items: center;
  width: ${(p) => (p.$active ? 34 : 32)}px;
  height: 29px;
  margin-left: 10px;
  border-left: 1px solid #d9d9d9;
`
const Search = styled.label`
  display: flex;
  align-items: center;
  width: 255px;
  margin-left: 12px;
  padding: 0 8px;
  border: 1px solid #d9d9d9;
  input { flex: 1; min-width: 0; outline: 0; }
`
const Main = styled.div`
  display: flex;
  flex: 1;
  min-height: 0;
`
const Tree = styled.nav`
  width: 164px;
  margin-right: 1px;
  overflow: hidden;
`
const TreeGroup = styled.div`
  margin-bottom: 8px;
`
const TreeItem = styled.a`
  display: flex;
  align-items: center;
  gap: 5px;
  height: 24px;
  padding: 0 0 2px ${(p) => (p.$sub ? 32 : 24)}px;
  background: ${(p) => (p.$current ? '#d9d9d9' : 'none')};
  white-space: nowrap;
`
const VScroll = styled.div`
  display: flex;
  flex-direction: column;
  width: 16px;
  background: #f0f0f0;
`
const ScrollEnd = styled.i`
  display: grid;
  place-items: center;
  flex: none;
  width: 16px;
  height: 17px;
`
const Track = styled.i`
  flex: ${(p) => p.$size};
`
const Thumb = styled(Track)`
  background: #cdcdcd;
`
const Files = styled.div`
  position: relative;
  display: flex;
  flex-direction: column;
  justify-content: space-between;
  flex: 1;
  min-width: 0;
  margin-left: 2px;
  overflow: hidden;
  border-left: 1px solid #f0f0f0;
`
const SortMark = styled.span`
  position: absolute;
  left: 138px;
  top: -5px;
`
const Table = styled.table`
  width: 601px;
  margin-left: 15px;
  table-layout: fixed;
  border-collapse: collapse;
  th {
    height: 27px;
    padding: 0 0 0 7px;
    font-weight: 400;
    text-align: left;
    color: #4c607a;
    border-right: 1px solid #e5e5e5;
  }
  th:first-child { padding-left: 3px; }
  tbody::before { content: ''; display: block; height: 6px; }
  td {
    height: 21px;
    padding: 0 0 0 7px;
    color: #6d6d6d;
  }
  td:first-child { padding-left: 5px; color: #000; }
  td:last-child { padding-right: 7px; text-align: right; }
`
const NameHead = styled.th`
  width: 257px;
`
const DateHead = styled.th`
  width: 144px;
`
const TypeHead = styled.th`
  width: 120px;
`
const SizeHead = styled.th`
  width: 80px;
`
const Row = styled.tr`
  ${(p) => p.$selected && css`
    background: #cce8ff;
    outline: 1px solid #99d1ff;
    outline-offset: -1px;
  `}
`
const FileName = styled.span`
  display: flex;
  align-items: center;
  gap: 3px;
`
const HScroll = styled.div`
  display: flex;
  height: 16px;
  background: #f0f0f0;
`
const Status = styled.footer`
  display: flex;
  align-items: center;
  flex: none;
  gap: 10px;
  height: 23px;
  padding-left: 14px;
  color: #1e395b;
`
const Count = styled.span`
  padding-right: 10px;
  border-right: 1px solid #eee;
`
const Views = styled.div`
  display: flex;
  margin-left: auto;
  padding-right: 4px;
`
const ViewButton = styled.button`
  display: grid;
  place-items: center;
  width: 22px;
  height: 23px;
  ${(p) => p.$on && css`
    border: 1px solid #26a0da;
    background: #cbe8f6;
  `}
`
const Marks = styled.svg`
  position: absolute;
  left: 0;
  top: 0;
  pointer-events: none;
`
const Watermark = styled.div`
  position: absolute;
  right: 16px;
  bottom: 7px;
  color: rgba(110, 110, 110, .85);
`
